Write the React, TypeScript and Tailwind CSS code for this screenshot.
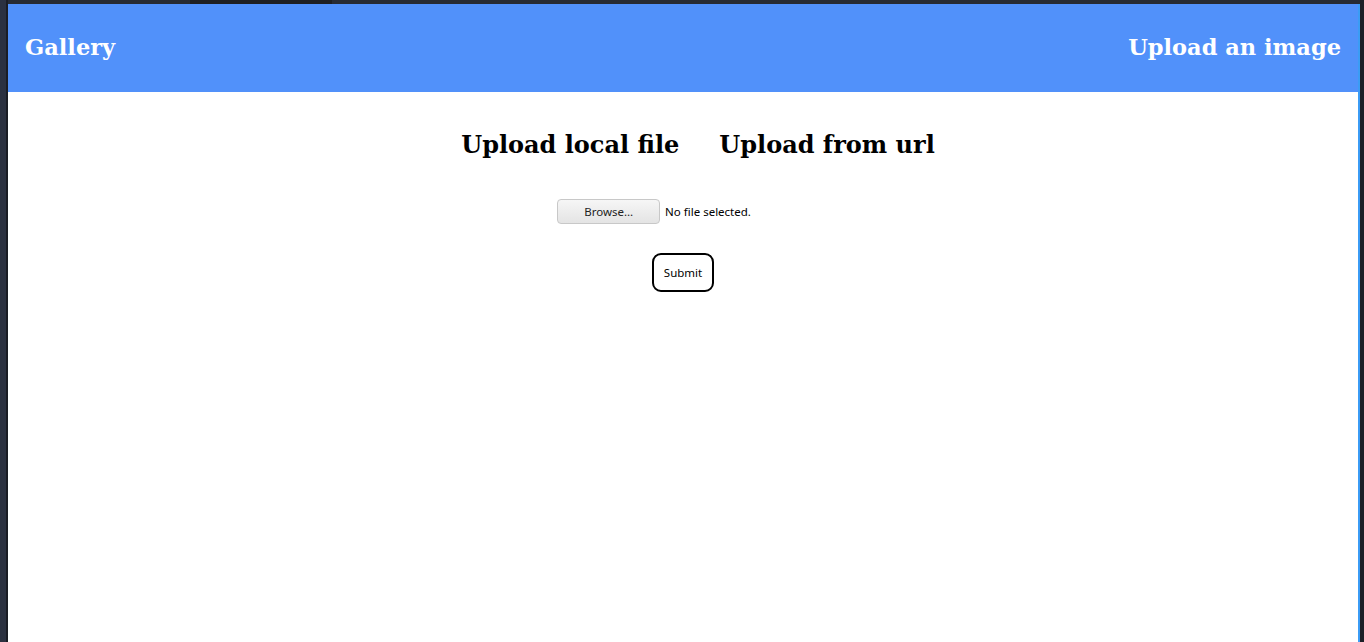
export default function App() {
  return (
    <div className="w-[1364px] h-[642px] bg-[#272b33] flex overflow-hidden">
      <div className="w-[6px] h-full bg-[#2b3140]" />
      <div className="w-[2px] h-full bg-[#1a1d24]" />
      <div className="flex-1 flex flex-col">
        <div className="h-[4px] flex">
          <div className="w-[182px] bg-[#272b33]" />
          <div className="w-[142px] bg-[#1e1f22]" />
          <div className="flex-1 bg-[#272b33]" />
        </div>
        <div className="flex-1 bg-white flex flex-col">
          <header className="h-[88px] bg-[#5191fa] flex items-center justify-between pl-[17px] pr-[17px] text-white font-bold text-[22.5px]" style={{ fontFamily: '"DejaVu Serif", serif' }}>
            <span>Gallery</span>
            <span>Upload an image</span>
          </header>
          <div className="flex justify-center mt-[37px] text-black font-bold text-[24px] leading-[32px]" style={{ fontFamily: '"DejaVu Serif", serif' }}>
            <div className="flex gap-[40px] ml-[30px]">
              <span>Upload local file</span>
              <span>Upload from url</span>
            </div>
          </div>
          <div className="flex justify-center mt-[38px]">
            <div className="flex items-center mr-[58px]" style={{ fontFamily: '"Noto Sans", sans-serif' }}>
              <button className="w-[103px] h-[25px] rounded-[4px] border border-[#c8c8c8] bg-gradient-to-b from-[#f6f6f6] to-[#e4e4e4] text-[11.5px] leading-[23px] text-[#222]">Browse…</button>
              <span className="ml-[5px] text-[11.5px] text-black">No file selected.</span>
            </div>
          </div>
          <div className="flex justify-center mt-[29px]">
            <button className="w-[62px] h-[39px] rounded-[9px] border-2 border-black bg-white text-[11.5px] leading-[35px] text-black" style={{ fontFamily: '"Noto Sans", sans-serif' }}>Submit</button>
          </div>
        </div>
      </div>
      <div className="w-[2px] h-full flex flex-col">
        <div className="h-[4px] bg-[#272b33]" />
        <div className="flex-1 bg-[#3b9cf5]" />
      </div>
      <div className="w-[4px] h-full bg-[#1c2027]" />
    </div>
  );
}
